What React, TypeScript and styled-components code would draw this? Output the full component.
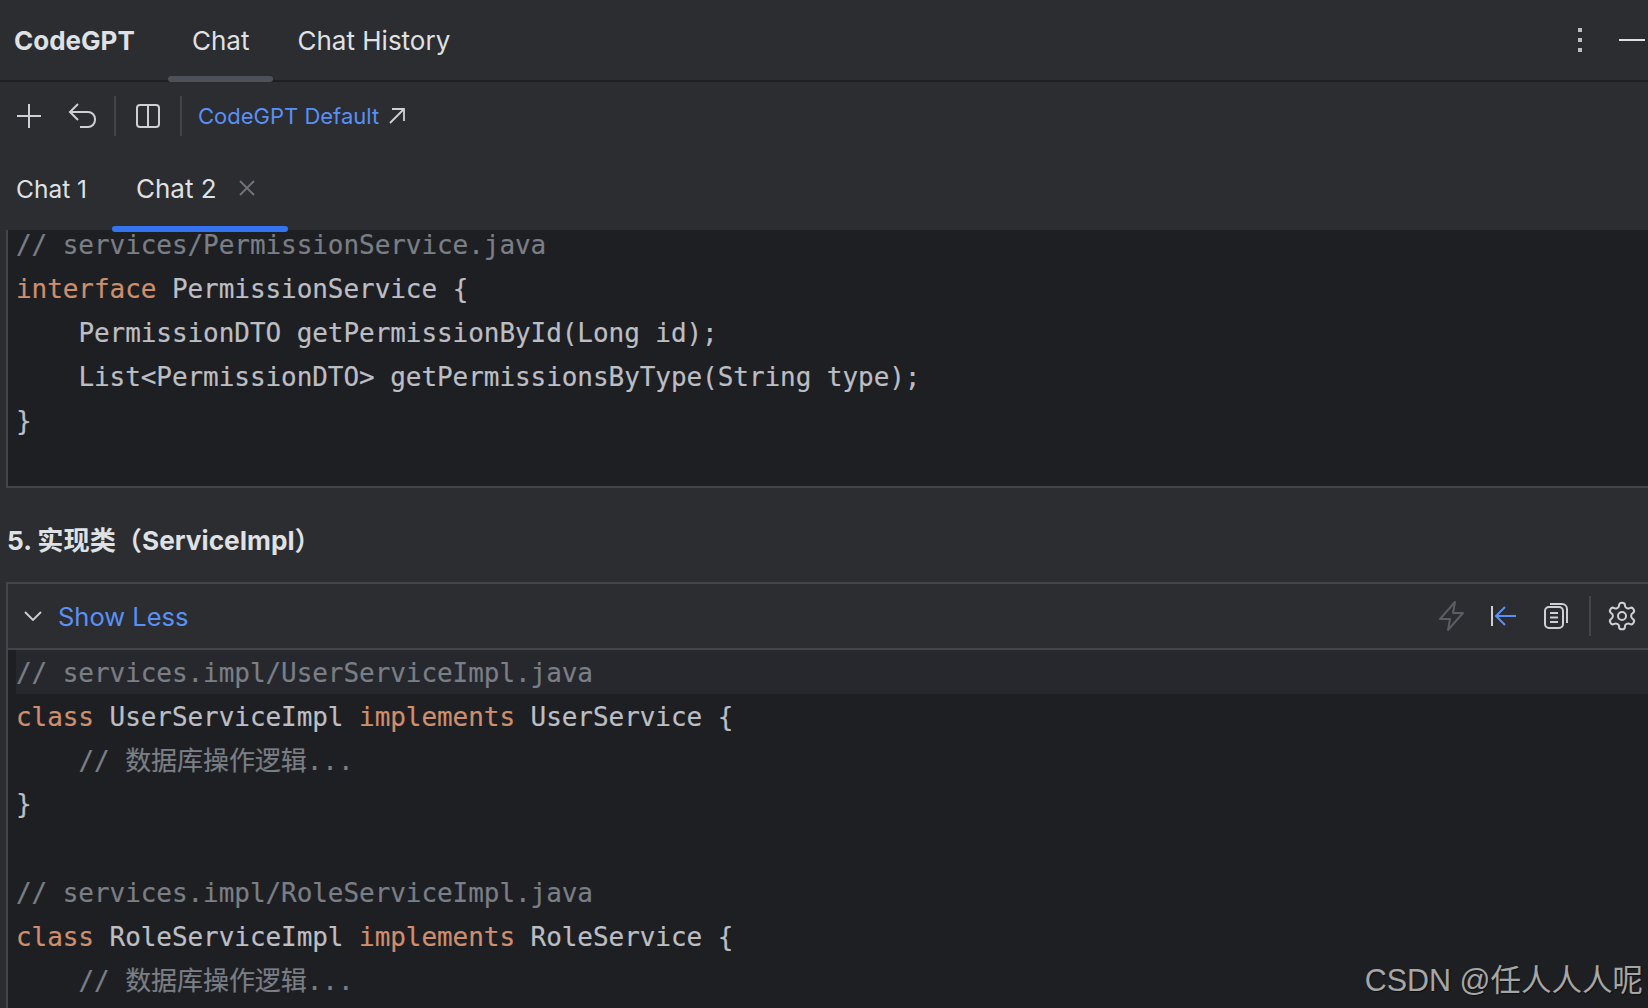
import styled, { createGlobalStyle } from 'styled-components';

const GlobalStyle = createGlobalStyle`
  html, body {
    margin: 0;
    padding: 0;
    background: #2b2d30;
    overflow: hidden;
  }
`;

const App = () => {
  return (
    <Page>
      <GlobalStyle />
      <TopBar>
        <Brand>CodeGPT</Brand>
        <TopTab $active>Chat</TopTab>
        <TopTab>Chat History</TopTab>
        <TopActions>
          <svg width="6" height="24" viewBox="0 0 6 24">
            <rect x="1" y="0" width="4" height="4" fill="#bcbec4" />
            <rect x="1" y="10" width="4" height="4" fill="#bcbec4" />
            <rect x="1" y="20" width="4" height="4" fill="#bcbec4" />
          </svg>
          <MinimizeBar />
        </TopActions>
      </TopBar>
      <Toolbar>
        <ToolIcon $width={52}>
          <svg width="28" height="28" viewBox="0 0 28 28" fill="none" stroke="#ced0d6" strokeWidth="2">
            <path d="M14 2v24M2 14h24" />
          </svg>
        </ToolIcon>
        <ToolIcon $width={47}>
          <svg width="30" height="28" viewBox="0 0 30 28" fill="none" stroke="#ced0d6" strokeWidth="2">
            <path d="M11 2 3 10l8 8M3 10h18a7 7 0 0 1 7 7v1a7 7 0 0 1-7 7h-8" />
          </svg>
        </ToolIcon>
        <ToolDivider $gap={19} />
        <ToolIcon $width={45}>
          <svg width="26" height="26" viewBox="0 0 26 26" fill="none" stroke="#ced0d6" strokeWidth="2">
            <rect x="2" y="2" width="22" height="22" rx="3" />
            <path d="M13 2v22" />
          </svg>
        </ToolIcon>
        <ToolDivider $gap={16} />
        <ProfileLink>CodeGPT Default</ProfileLink>
        <svg width="16" height="16" viewBox="0 0 16 16" fill="none" stroke="#ced0d6" strokeWidth="1.800">
          <path d="M1 15 15 1M3 1h12v12" />
        </svg>
      </Toolbar>
      <ChatTabs>
        <ChatTab>Chat 1</ChatTab>
        <ChatTab $active>
          Chat 2
          <svg width="16" height="16" viewBox="0 0 16 16" fill="none" stroke="#6f737a" strokeWidth="1.800">
            <path d="M1 1l14 14M15 1 1 15" />
          </svg>
        </ChatTab>
      </ChatTabs>
      <CodeFrame $top>
        <CodeLine $clipped><Comment>// services/PermissionService.java</Comment></CodeLine>
        <CodeLine><Keyword>interface</Keyword> PermissionService {'{'}</CodeLine>
        <CodeLine>{'    '}PermissionDTO getPermissionById(Long id);</CodeLine>
        <CodeLine>{'    '}List&lt;PermissionDTO&gt; getPermissionsByType(String type);</CodeLine>
        <CodeLine>{'}'}</CodeLine>
        <Spacer />
      </CodeFrame>
      <Heading>5. 实现类（ServiceImpl）</Heading>
      <CodeFrame>
        <BlockHeader>
          <svg width="18" height="10" viewBox="0 0 18 10" fill="none" stroke="#ced0d6" strokeWidth="1.800">
            <path d="M1 1l8 8 8-8" />
          </svg>
          <ShowLess>Show Less</ShowLess>
          <BlockActions>
            <svg width="28" height="32" viewBox="0 0 28 32" fill="none" stroke="#5a5d63" strokeWidth="2">
              <path d="M17 2 2 19h10l-2 11 15-17H15z" strokeLinejoin="round" />
            </svg>
            <svg width="26" height="22" viewBox="0 0 26 22" fill="none" stroke="#5a90f5" strokeWidth="2">
              <path d="M25 11H6M14 2l-9 9 9 9" />
              <path d="M1 1v20" stroke="#ced0d6" />
            </svg>
            <svg width="24" height="26" viewBox="0 0 24 26" fill="none" stroke="#ced0d6" strokeWidth="2">
              <rect x="1" y="4" width="18" height="21" rx="4" />
              <path d="M6 1h12a5 5 0 0 1 5 5v14M6 10h8M6 14.500h8M6 19h8" />
            </svg>
            <ActionDivider />
            <svg width="32" height="32" viewBox="0 0 24 24" fill="none" stroke="#ced0d6" strokeWidth="1.500">
              <circle cx="12" cy="12" r="3" />
              <path d="M12.220 2h-.44a2 2 0 0 0-2 2v.18a2 2 0 0 1-1 1.730l-.43.250a2 2 0 0 1-2 0l-.15-.080a2 2 0 0 0-2.730.730l-.22.380a2 2 0 0 0 .730 2.730l.15.100a2 2 0 0 1 1 1.720v.510a2 2 0 0 1-1 1.740l-.15.090a2 2 0 0 0-.730 2.730l.22.380a2 2 0 0 0 2.730.730l.15-.080a2 2 0 0 1 2 0l.43.250a2 2 0 0 1 1 1.730V20a2 2 0 0 0 2 2h.44a2 2 0 0 0 2-2v-.18a2 2 0 0 1 1-1.730l.43-.250a2 2 0 0 1 2 0l.15.080a2 2 0 0 0 2.730-.730l.22-.390a2 2 0 0 0-.730-2.730l-.15-.080a2 2 0 0 1-1-1.740v-.500a2 2 0 0 1 1-1.740l.15-.090a2 2 0 0 0 .730-2.730l-.22-.380a2 2 0 0 0-2.730-.730l-.15.080a2 2 0 0 1-2 0l-.43-.250a2 2 0 0 1-1-1.730V4a2 2 0 0 0-2-2z" />
            </svg>
          </BlockActions>
        </BlockHeader>
        <CodeLine $highlight $low><Comment>// services.impl/UserServiceImpl.java</Comment></CodeLine>
        <CodeLine $low><Keyword>class</Keyword> UserServiceImpl <Keyword>implements</Keyword> UserService {'{'}</CodeLine>
        <CodeLine $low>{'    '}<Comment>// 数据库操作逻辑...</Comment></CodeLine>
        <CodeLine>{'}'}</CodeLine>
        <CodeLine />
        <CodeLine $low><Comment>// services.impl/RoleServiceImpl.java</Comment></CodeLine>
        <CodeLine $low><Keyword>class</Keyword> RoleServiceImpl <Keyword>implements</Keyword> RoleService {'{'}</CodeLine>
        <CodeLine $low>{'    '}<Comment>// 数据库操作逻辑...</Comment></CodeLine>
      </CodeFrame>
      <Watermark>CSDN @任人人人呢</Watermark>
    </Page>
  );
};

export default App;

const sans = `Inter, "Noto Sans CJK SC", sans-serif`;
const mono = `"DejaVu Sans Mono", "Noto Sans CJK SC", monospace`;

const Page = styled.div`
  position: relative;
  width: 1648px;
  height: 1008px;
  display: flex;
  flex-direction: column;
  overflow: hidden;
  background: #2b2d30;
  font-family: ${sans};
  color: #dfe1e5;
`;

const TopBar = styled.div`
  flex: none;
  height: 80px;
  display: flex;
  align-items: stretch;
  border-bottom: 2px solid #1e1f22;
`;

const Brand = styled.div`
  width: 168px;
  padding-left: 14px;
  box-sizing: border-box;
  font-size: 26px;
  font-weight: 700;
  line-height: 82px;
  color: #dfe1e5;
`;

const TopTab = styled.div<{ $active?: boolean }>`
  position: relative;
  padding: 0 24px;
  font-size: 26px;
  line-height: 82px;
  color: #dfe1e5;

  &::after {
    content: '';
    display: ${(p) => (p.$active ? 'block' : 'none')};
    position: absolute;
    left: 0;
    right: 0;
    bottom: -2px;
    height: 6px;
    border-radius: 3px;
    background: #4e5157;
  }
`;

const TopActions = styled.div`
  margin-left: auto;
  display: flex;
  align-items: center;
  gap: 36px;
  padding-right: 3px;
`;

const MinimizeBar = styled.div`
  width: 26px;
  height: 2px;
  background: #dfe1e5;
`;

const Toolbar = styled.div`
  flex: none;
  height: 66px;
  display: flex;
  align-items: center;
  padding: 2px 0 0 15px;
  box-sizing: border-box;
`;

const ToolIcon = styled.div<{ $width: number }>`
  display: flex;
  width: ${(p) => p.$width}px;
  align-items: center;
`;

const ToolDivider = styled.div<{ $gap: number }>`
  width: 2px;
  height: 40px;
  margin-right: ${(p) => p.$gap}px;
  background: #43454a;
`;

const ProfileLink = styled.span`
  font-size: 22px;
  color: #5a90f5;
  margin-right: 10px;
`;

const ChatTabs = styled.div`
  flex: none;
  height: 82px;
  display: flex;
  align-items: stretch;
`;

const ChatTab = styled.div<{ $active?: boolean }>`
  position: relative;
  z-index: 1;
  box-sizing: border-box;
  width: ${(p) => (p.$active ? '176px' : '112px')};
  display: flex;
  align-items: center;
  gap: 22px;
  padding: ${(p) => (p.$active ? '0 0 2px 24px' : '0 0 0 16px')};
  font-size: ${(p) => (p.$active ? '26px' : '24.500px')};
  color: #dfe1e5;

  &::after {
    content: '';
    display: ${(p) => (p.$active ? 'block' : 'none')};
    position: absolute;
    left: 0;
    right: 0;
    bottom: -2px;
    height: 6px;
    border-radius: 3px;
    background: #3574f0;
  }
`;

const CodeFrame = styled.div<{ $top?: boolean }>`
  flex: ${(p) => (p.$top ? 'none' : '1')};
  margin-left: 6px;
  box-sizing: border-box;
  background: #1e1f22;
  border-left: 2px solid #43454a;
  border-top: ${(p) => (p.$top ? 'none' : '2px solid #43454a')};
  border-bottom: ${(p) => (p.$top ? '2px solid #43454a' : 'none')};
`;

const CodeLine = styled.div<{ $highlight?: boolean; $clipped?: boolean; $low?: boolean }>`
  height: ${(p) => (p.$clipped ? '37px' : '44px')};
  margin-left: ${(p) => (p.$highlight ? '8px' : '0')};
  padding-left: ${(p) => (p.$highlight ? '0' : '8px')};
  background: ${(p) => (p.$highlight ? '#26282e' : 'transparent')};
  font-family: ${mono};
  font-size: 26px;
  letter-spacing: -0.06px;
  -webkit-text-stroke: 0.2px;
  line-height: ${(p) => (p.$clipped ? '30px' : p.$low ? '46px' : '44px')};
  white-space: pre;
  color: #bcbec4;
`;

const Spacer = styled.div`
  height: 43px;
`;

const Comment = styled.span`
  color: #7a7e85;
`;

const Keyword = styled.span`
  color: #cf8e6d;
`;

const Heading = styled.div`
  flex: none;
  height: 94px;
  padding-left: 7px;
  font-size: 26.200px;
  font-weight: 700;
  line-height: 106px;
  color: #dfe1e5;
`;

const BlockHeader = styled.div`
  height: 64px;
  display: flex;
  align-items: center;
  padding-left: 16px;
  background: #2b2d30;
  border-bottom: 2px solid #43454a;
`;

const ShowLess = styled.span`
  margin-left: 16px;
  font-size: 25.500px;
  color: #5a90f5;
`;

const BlockActions = styled.div`
  margin-left: auto;
  display: flex;
  align-items: center;
  gap: 27px;
  padding-right: 10px;

  & > svg:first-child {
    margin-right: -2px;
  }
`;

const ActionDivider = styled.div`
  width: 2px;
  height: 40px;
  margin: 0 -12px 0 -6px;
  background: #43454a;
`;

const Watermark = styled.div`
  position: absolute;
  right: 5px;
  bottom: 8px;
  font-family: "Liberation Sans", "Noto Sans CJK SC", sans-serif;
  font-size: 30.500px;
  color: #a6a6a6;
  text-shadow: 1px 1px 1px rgba(0, 0, 0, 0.5);
`;
